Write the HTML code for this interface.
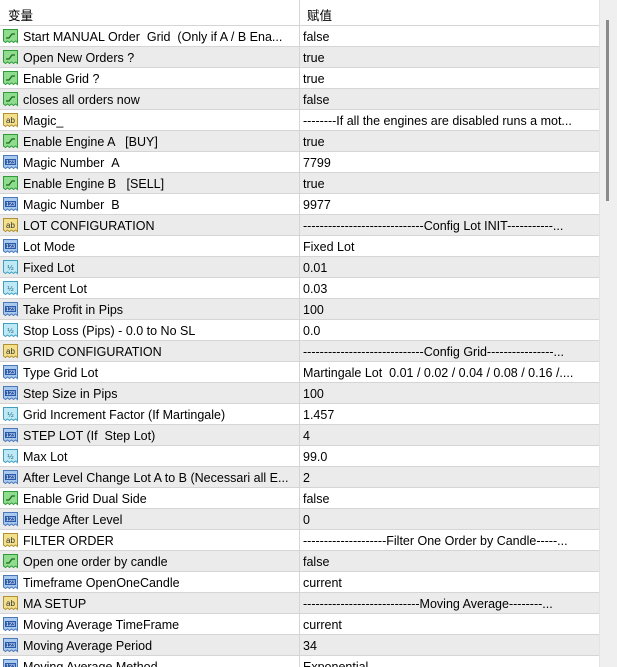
<!DOCTYPE html>
<html style="overflow:hidden;height:667px"><head><meta charset="utf-8"><style>
*{margin:0;padding:0;box-sizing:border-box}
body{width:617px;height:667px;overflow:hidden;background:#fff;font-family:"Liberation Sans","Noto Sans CJK SC",sans-serif;font-size:12.5px;color:#000;position:relative}
.hdr{position:absolute;left:0;top:0;width:599px;height:26px;border-bottom:1px solid #d5d5d5;background:#fff}
.hdr span{position:absolute;top:5px;font-family:"Noto Sans CJK SC",sans-serif;font-size:12.5px}
.vl{position:absolute;left:299px;top:0;width:1px;height:667px;background:#d5d5d5}
.r{position:absolute;left:0;width:599px;height:21px;border-bottom:1px solid #d5d5d5}
.r.g{background:#ebebeb}
.r svg{position:absolute;left:2px;top:2px}
.n{position:absolute;left:23px;top:4px;width:274px;white-space:nowrap;overflow:hidden}
.v{position:absolute;left:303px;top:4px;width:292px;white-space:nowrap;overflow:hidden}
.sb{position:absolute;left:599px;top:0;width:18px;height:667px;background:#efefef;border-left:1px solid #e3e3e3}
.th{position:absolute;left:606px;top:20px;width:3px;height:181px;background:#8a8a8a}
</style></head><body>
<svg width="0" height="0" style="position:absolute"><defs>
<g id="b"><path d="M1.5 1.5h14v13l-2-1.5-2 1.5-2-1.5-2 1.5-2-1.5-2 1.5-2-1.5z" fill="#8fdc8f" stroke="#2f9a3a"/><path d="M4 10h3l3-4h3" fill="none" stroke="#1a6a1a" stroke-width="1.3"/></g>
<g id="i"><path d="M1.5 1.5h14v13l-2-1.5-2 1.5-2-1.5-2 1.5-2-1.5-2 1.5-2-1.5z" fill="#a9c9ef" stroke="#4a78b8"/><rect x="3" y="5" width="11" height="6" fill="#2a5aa8"/><text x="8.5" y="10" font-size="5.5" fill="#fff" text-anchor="middle" font-family="Liberation Sans">123</text></g>
<g id="a"><path d="M1.5 1.5h14v13l-2-1.5-2 1.5-2-1.5-2 1.5-2-1.5-2 1.5-2-1.5z" fill="#f3e08c" stroke="#b09030"/><text x="8.5" y="11" font-size="8" fill="#333" text-anchor="middle" font-family="Liberation Sans">ab</text></g>
<g id="d"><path d="M1.5 1.5h14v13l-2-1.5-2 1.5-2-1.5-2 1.5-2-1.5-2 1.5-2-1.5z" fill="#bfe8f5" stroke="#3fa0c0"/><text x="8.5" y="11" font-size="7.5" fill="#1a6a8a" text-anchor="middle" font-family="Liberation Sans">½</text></g>
</defs></svg>
<div class="hdr"><span style="left:8px">变量</span><span style="left:307px">赋值</span></div>
<div class="r" style="top:26px"><svg width="17" height="16"><use href="#b"/></svg><div class="n">Start MANUAL Order &nbsp;Grid &nbsp;(Only if A / B Ena...</div><div class="v">false</div></div>
<div class="r g" style="top:47px"><svg width="17" height="16"><use href="#b"/></svg><div class="n">Open New Orders ?</div><div class="v">true</div></div>
<div class="r" style="top:68px"><svg width="17" height="16"><use href="#b"/></svg><div class="n">Enable Grid ?</div><div class="v">true</div></div>
<div class="r g" style="top:89px"><svg width="17" height="16"><use href="#b"/></svg><div class="n">closes all orders now</div><div class="v">false</div></div>
<div class="r" style="top:110px"><svg width="17" height="16"><use href="#a"/></svg><div class="n">Magic_</div><div class="v">--------If all the engines are disabled runs a mot...</div></div>
<div class="r g" style="top:131px"><svg width="17" height="16"><use href="#b"/></svg><div class="n">Enable Engine A &nbsp;&nbsp;[BUY]</div><div class="v">true</div></div>
<div class="r" style="top:152px"><svg width="17" height="16"><use href="#i"/></svg><div class="n">Magic Number &nbsp;A</div><div class="v">7799</div></div>
<div class="r g" style="top:173px"><svg width="17" height="16"><use href="#b"/></svg><div class="n">Enable Engine B &nbsp;&nbsp;[SELL]</div><div class="v">true</div></div>
<div class="r" style="top:194px"><svg width="17" height="16"><use href="#i"/></svg><div class="n">Magic Number &nbsp;B</div><div class="v">9977</div></div>
<div class="r g" style="top:215px"><svg width="17" height="16"><use href="#a"/></svg><div class="n">LOT CONFIGURATION</div><div class="v">-----------------------------Config Lot INIT-----------...</div></div>
<div class="r" style="top:236px"><svg width="17" height="16"><use href="#i"/></svg><div class="n">Lot Mode</div><div class="v">Fixed Lot</div></div>
<div class="r g" style="top:257px"><svg width="17" height="16"><use href="#d"/></svg><div class="n">Fixed Lot</div><div class="v">0.01</div></div>
<div class="r" style="top:278px"><svg width="17" height="16"><use href="#d"/></svg><div class="n">Percent Lot</div><div class="v">0.03</div></div>
<div class="r g" style="top:299px"><svg width="17" height="16"><use href="#i"/></svg><div class="n">Take Profit in Pips</div><div class="v">100</div></div>
<div class="r" style="top:320px"><svg width="17" height="16"><use href="#d"/></svg><div class="n">Stop Loss (Pips) - 0.0 to No SL</div><div class="v">0.0</div></div>
<div class="r g" style="top:341px"><svg width="17" height="16"><use href="#a"/></svg><div class="n">GRID CONFIGURATION</div><div class="v">-----------------------------Config Grid----------------...</div></div>
<div class="r" style="top:362px"><svg width="17" height="16"><use href="#i"/></svg><div class="n">Type Grid Lot</div><div class="v">Martingale Lot &nbsp;0.01 / 0.02 / 0.04 / 0.08 / 0.16 /....</div></div>
<div class="r g" style="top:383px"><svg width="17" height="16"><use href="#i"/></svg><div class="n">Step Size in Pips</div><div class="v">100</div></div>
<div class="r" style="top:404px"><svg width="17" height="16"><use href="#d"/></svg><div class="n">Grid Increment Factor (If Martingale)</div><div class="v">1.457</div></div>
<div class="r g" style="top:425px"><svg width="17" height="16"><use href="#i"/></svg><div class="n">STEP LOT (If &nbsp;Step Lot)</div><div class="v">4</div></div>
<div class="r" style="top:446px"><svg width="17" height="16"><use href="#d"/></svg><div class="n">Max Lot</div><div class="v">99.0</div></div>
<div class="r g" style="top:467px"><svg width="17" height="16"><use href="#i"/></svg><div class="n">After Level Change Lot A to B (Necessari all E...</div><div class="v">2</div></div>
<div class="r" style="top:488px"><svg width="17" height="16"><use href="#b"/></svg><div class="n">Enable Grid Dual Side</div><div class="v">false</div></div>
<div class="r g" style="top:509px"><svg width="17" height="16"><use href="#i"/></svg><div class="n">Hedge After Level</div><div class="v">0</div></div>
<div class="r" style="top:530px"><svg width="17" height="16"><use href="#a"/></svg><div class="n">FILTER ORDER</div><div class="v">--------------------Filter One Order by Candle-----...</div></div>
<div class="r g" style="top:551px"><svg width="17" height="16"><use href="#b"/></svg><div class="n">Open one order by candle</div><div class="v">false</div></div>
<div class="r" style="top:572px"><svg width="17" height="16"><use href="#i"/></svg><div class="n">Timeframe OpenOneCandle</div><div class="v">current</div></div>
<div class="r g" style="top:593px"><svg width="17" height="16"><use href="#a"/></svg><div class="n">MA SETUP</div><div class="v">----------------------------Moving Average--------...</div></div>
<div class="r" style="top:614px"><svg width="17" height="16"><use href="#i"/></svg><div class="n">Moving Average TimeFrame</div><div class="v">current</div></div>
<div class="r g" style="top:635px"><svg width="17" height="16"><use href="#i"/></svg><div class="n">Moving Average Period</div><div class="v">34</div></div>
<div class="r" style="top:656px"><svg width="17" height="16"><use href="#i"/></svg><div class="n">Moving Average Method</div><div class="v">Exponential</div></div>
<div class="vl"></div>
<div class="sb"></div><div class="th"></div>
</body></html>
